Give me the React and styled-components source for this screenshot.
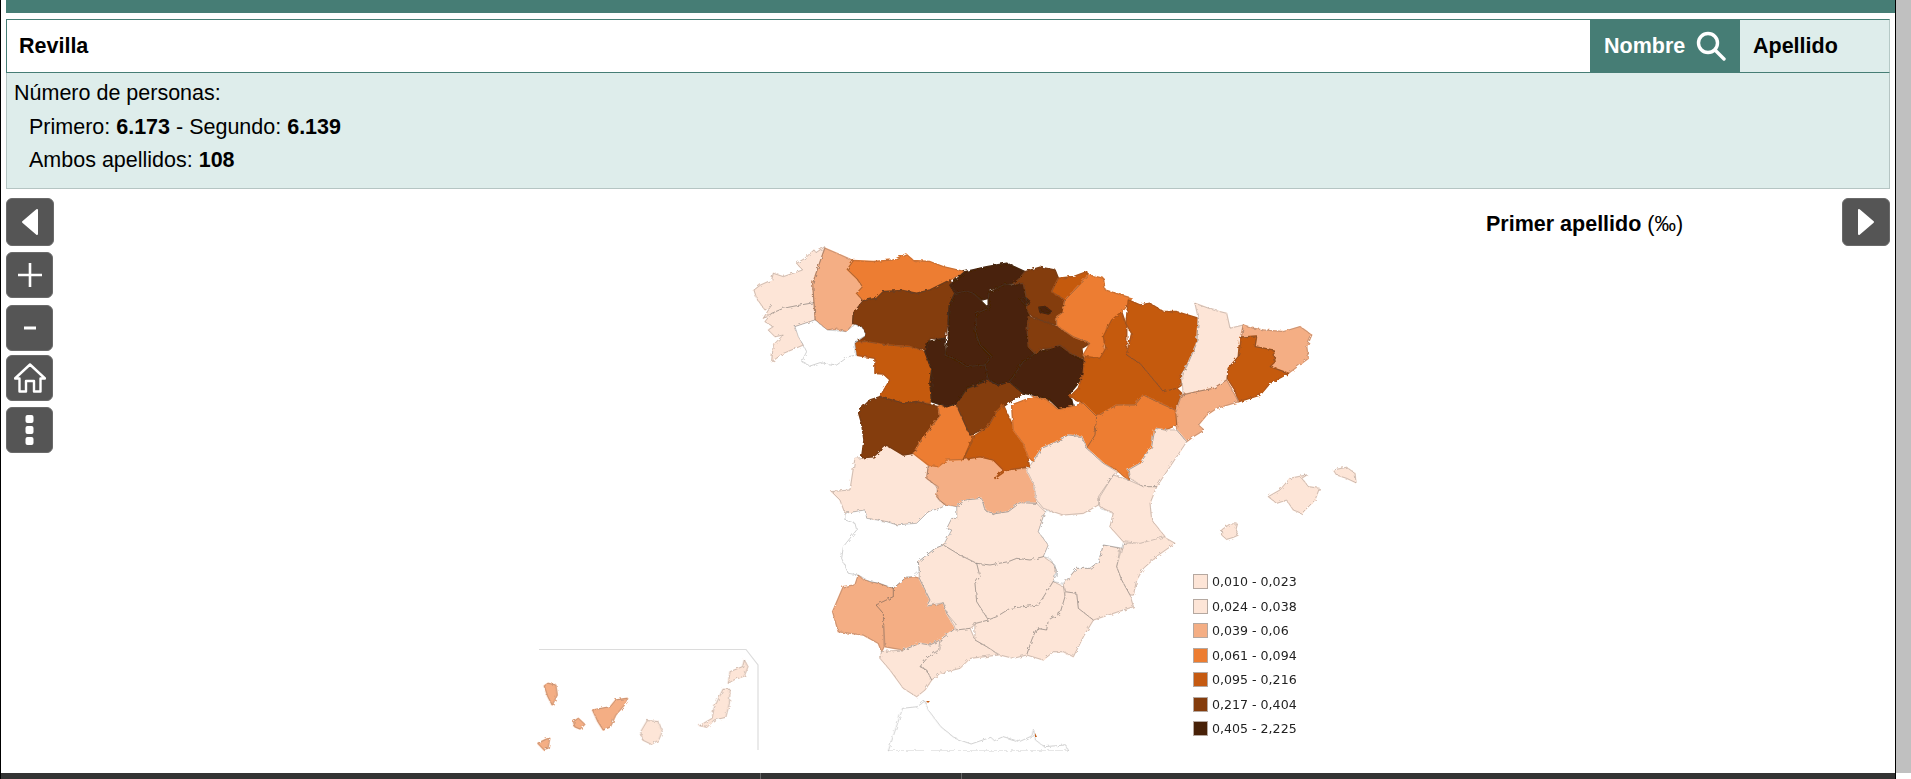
import React from "react"
import styled, { createGlobalStyle } from "styled-components"

const C1 = "#fde5d7"
const C3 = "#f4ae84"
const C4 = "#ed7d31"
const C5 = "#c55a11"
const C6 = "#843c0c"
const C7 = "#482107"
const NONE = "#fff"

// traced by hand, each group in its own crop coordinates
const north = [
  [C1, "255,50 228,68 222,60 195,85 170,100 188,120 165,128 130,140 100,130 95,150 62,165 42,180 50,205 75,240 95,225 70,265 95,250 130,235 165,228 222,218 218,160 235,110"],
  [C1, "222,218 165,228 130,235 95,250 75,275 100,290 85,300 105,320 130,315 100,345 95,395 130,370 190,345 165,290 225,270"],
  [C3, "255,55 290,70 340,92 322,118 350,145 368,170 350,190 368,212 340,250 338,280 320,305 285,295 262,300 226,270 218,160 235,110"],
  [NONE, "165,290 225,270 262,300 318,305 345,283 365,290 380,315 345,340 350,375 325,380 290,405 240,398 210,408 185,395 200,365 190,345 175,320"],
  [C4, "340,92 400,95 460,90 498,72 520,92 570,95 610,110 675,125 630,150 570,180 530,190 490,182 430,185 410,205 370,212 350,190 368,170 350,145 322,118"],
  [C6, "370,212 410,205 430,185 490,182 530,190 570,180 630,150 645,185 628,225 625,270 615,325 570,325 560,360 510,350 440,345 380,335 345,335 380,315 365,290 338,280 340,250"],
  [C5, "345,335 380,335 440,345 510,350 555,365 575,420 578,460 570,520 530,515 490,520 420,500 450,450 430,432 405,430 405,385 345,375 345,340"],
  [C6, "420,500 490,520 530,515 595,530 598,560 575,590 545,630 520,670 490,675 440,645 400,680 365,683 372,630 365,580 355,545 390,510"],
  [C4, "595,528 640,525 650,530 690,615 705,620 670,688 620,690 595,710 565,705 520,670 545,630 575,590 598,560"],
  [C6, "650,525 680,478 745,450 775,465 808,455 850,490 810,515 770,545 745,590 690,615"],
  [C5, "790,525 815,580 860,660 868,710 800,720 765,745 790,720 760,690 720,680 670,688 700,620 745,590 770,545"],
  [C7, "675,125 740,110 770,105 800,100 855,125 835,150 820,160 790,165 750,180 745,205 725,210 700,190 680,183 645,190 630,165"],
  [C7, "645,190 680,183 700,190 725,215 745,235 710,250 705,300 720,345 755,380 735,405 680,410 650,390 615,375 625,330 625,270 628,225"],
  [C7, "560,335 615,325 615,375 650,390 680,410 735,405 745,450 680,475 650,520 620,530 575,515 570,460 575,420 555,365"],
  [C7, "745,190 790,165 820,165 850,160 860,205 860,235 870,260 862,300 865,350 885,370 850,395 820,440 808,455 775,465 745,450 735,405 755,380 720,345 705,300 710,250 745,235 745,205"],
  [C7, "885,370 930,355 960,345 1000,375 1030,390 1038,425 1010,465 990,490 1000,530 960,540 930,510 880,495 850,490 808,455 820,440 850,395"],
  [C6, "865,260 900,270 950,290 1000,320 1050,340 1025,355 1030,385 1000,375 960,345 930,355 910,355 885,370 865,350 862,300"],
  [C6, "820,160 835,150 855,125 900,112 945,120 955,145 935,185 975,210 965,250 950,260 950,285 900,270 870,255 860,235 860,205 850,160"],
  [C7, "897,232 915,230 935,245 925,252 900,246"],
  [C7, "842,208 858,204 870,215 855,224"],
  [C5, "955,145 1000,140 1040,125 1045,140 975,210 935,185"],
  [C4, "1045,135 1090,145 1095,180 1175,205 1155,235 1100,290 1090,340 1095,375 1070,390 1030,375 1050,340 1000,320 950,285 950,260 965,250 975,210"],
]

const east = [
  [C5, "365,155 380,200 380,285 420,310 470,370 490,395 530,385 545,400 525,450 470,425 430,405 405,435 350,435 290,470 250,430 210,410 235,385 250,340 255,290 300,295 318,265 310,230 335,180"],
  [C5, "385,120 420,135 450,130 490,155 530,155 595,175 590,250 560,320 540,345 545,375 530,385 490,395 470,370 420,310 380,285 395,220 378,190"],
  [C1, "585,130 640,150 680,160 690,205 730,195 725,235 715,290 685,325 680,360 640,385 590,395 550,405 545,345 560,320 590,250 595,175"],
  [C3, "730,195 760,205 790,210 850,215 900,200 935,225 920,260 925,295 865,340 810,320 825,305 820,270 765,260 770,228 722,230"],
  [C5, "720,232 770,228 765,260 820,270 825,305 810,320 865,340 810,370 780,405 715,425 705,390 682,355 685,325 715,290"],
  [C3, "680,360 715,425 650,445 620,465 595,495 612,510 580,530 560,545 530,510 530,450 545,405 590,395 640,385"],
  [C4, "290,470 350,435 405,435 430,405 470,425 525,450 530,495 495,510 465,505 455,560 420,610 385,630 385,660 350,630 310,610 260,565 285,525"],
  [C1, "465,505 495,510 530,510 560,545 530,590 470,680 430,680 390,655 385,630 420,610 455,560"],
  [C4, "35,435 100,410 140,420 175,450 215,440 250,430 290,470 285,525 260,565 245,530 205,525 160,550 125,565 100,605 85,590 70,550 40,510"],
  [C1, "85,625 125,565 160,550 205,525 245,530 260,565 310,610 350,635 340,645 300,710 295,735 250,760 190,765 130,745 110,720 100,670 80,630"],
  [C1, "340,645 385,660 430,680 470,680 450,730 455,780 495,830 420,850 370,845 330,800 340,760 300,740 295,710"],
  [C1, "805,710 840,690 870,655 920,645 905,655 925,680 958,685 945,720 905,760 880,750 860,720 830,730"],
  [C1, "1000,630 1040,622 1065,640 1068,668 1040,655 1010,645"],
  [C1, "665,810 690,792 712,792 708,808 715,825 700,832 680,838 665,825"],
]

const south = [
  [C1, "165,-65 220,-70 260,-105 310,-75 340,-80 385,-45 380,-5 410,20 415,60 440,75 420,85 385,95 350,130 290,135 260,125 200,115 195,90 135,100 120,60 95,35 150,30"],
  [C3, "385,-40 440,-60 490,-62 540,-70 580,-60 610,-30 585,-5 620,-30 685,-35 705,35 710,70 660,68 625,95 580,102 555,90 545,55 495,60 470,80 440,80 410,50 415,20 380,-5"],
  [C1, "470,80 495,60 545,55 555,90 580,102 625,95 660,68 710,70 735,95 715,155 745,195 730,230 690,240 650,235 625,245 570,255 530,250 480,225 430,195 455,150 440,145 455,115 470,115"],
  [NONE, "135,100 195,90 200,115 260,125 290,135 350,130 385,95 420,85 440,75 470,80 470,115 455,115 440,145 455,150 430,195 405,205 355,245 358,275 340,290 320,290 280,325 240,310 210,305 175,285 145,280 125,235 130,200 170,150 165,130 135,120"],
  [NONE, "735,95 780,95 820,105 870,90 895,70 900,85 940,100 930,140 970,185 970,205 910,195 895,245 870,265 830,265 790,310 760,305 770,270 750,235 730,230 745,195 715,155"],
  [C3, "175,285 190,300 235,310 280,325 280,350 228,375 250,400 252,500 245,515 235,490 190,465 115,455 98,395 130,320 165,315"],
  [C3, "280,325 315,295 340,290 358,295 390,360 380,378 415,375 430,368 440,400 470,435 460,450 420,480 390,495 360,490 310,510 255,500 250,400 228,375 280,350"],
  [C1, "355,245 405,205 430,195 480,225 530,250 540,290 525,310 530,365 565,420 530,430 510,445 470,450 440,400 430,368 380,378 390,360 358,295 358,275"],
  [C1, "530,250 570,255 625,245 650,235 690,240 730,230 765,255 770,285 750,320 715,375 670,380 630,385 590,410 565,420 530,365 525,310 540,290"],
  [C1, "565,420 590,410 630,385 670,380 715,375 750,320 760,305 790,320 795,350 780,400 745,420 740,450 710,445 695,480 680,525 640,535 600,525 560,500 525,480 525,430"],
  [C1, "795,335 830,340 835,385 880,420 850,470 820,530 790,515 760,515 730,540 680,525 695,480 710,445 740,450 745,420 780,400 795,350"],
  [C1, "790,315 830,265 870,265 895,245 910,195 960,205 950,260 965,300 990,345 1000,380 880,420 835,385 830,340 795,335"],
  [C1, "970,190 1020,190 1090,170 1125,190 1075,225 1030,265 1010,300 1000,345 990,345 965,300 950,260 965,205"],
  [C1, "360,560 385,530 420,510 420,480 460,450 470,450 510,445 525,480 560,500 595,525 510,535 480,565 420,580 395,600 380,570"],
  [C1, "245,515 310,510 360,490 390,495 420,480 415,510 385,530 360,560 380,570 395,600 375,630 350,650 310,625 270,570 240,535"],
]

const islands = [
  [NONE, "1003,363 1043,235 1085,230 1105,213 1115,240 1150,290 1190,325 1235,342 1290,322 1300,332 1325,320 1370,335 1405,318 1410,298 1415,330 1440,350 1500,345 1508,363"],
  [C3, "40,168 50,160 72,165 76,195 62,225 50,200"],
  [C3, "122,275 135,265 153,283 140,297 125,290"],
  [C3, "175,240 225,230 240,210 272,205 272,215 240,255 225,290 205,300 190,275"],
  [C3, "22,340 45,328 55,325 50,355 38,358"],
  [C1, "328,272 360,275 370,305 360,330 340,343 315,330 310,305"],
  [C1, "540,178 560,178 558,220 548,262 515,270 495,292 475,287 510,265 515,235"],
  [C1, "600,90 610,110 600,138 570,150 555,160 560,125 595,110"],
]

const legend = [
  [C1, "0,010 - 0,023"],
  [C1, "0,024 - 0,038"],
  [C3, "0,039 - 0,06"],
  [C4, "0,061 - 0,094"],
  [C5, "0,095 - 0,216"],
  [C6, "0,217 - 0,404"],
  [C7, "0,405 - 2,225"],
]

const GlobalStyle = createGlobalStyle`
  html, body {
    margin: 0;
    height: 100%;
    overflow: hidden;
    background: #fff;
  }
  body {
    font-family: "Liberation Sans", Arial, sans-serif;
    color: #000;
  }
`

const Screen = styled.div`
  display: flex;
  height: 779px;
`

const Scrollbar = styled.div`
  width: 15px;
  height: 773px;
  background: #c0c0c0;
`

const Window = styled.div`
  flex: 1;
  min-width: 0;
  display: flex;
  flex-direction: column;
  border-left: 1px solid #000;
  border-right: 1px solid #000;
`

const Content = styled.div`
  flex: 1;
  padding-left: 5px;
`

const TopBar = styled.div`
  height: 13px;
  background: #467d75;
  margin-bottom: 6px;
`

const Panel = styled.div`
  margin-right: 5px;
`

const SearchRow = styled.div`
  display: flex;
  height: 54px;
  border: 1px solid #467d75;
  border-right-color: #b5c9c6;
  box-sizing: border-box;
  background: #deedeb;
`

const SearchInput = styled.div`
  flex: 1;
  display: flex;
  align-items: center;
  padding-left: 12px;
  background: #fff;
  font-size: 21.5px;
  font-weight: bold;
`

const Tab = styled.div`
  width: ${(p) => (p.$active ? 150 : 149)}px;
  box-sizing: border-box;
  display: flex;
  align-items: center;
  gap: 11px;
  padding-left: ${(p) => (p.$active ? 14 : 13)}px;
  margin: -1px 0;
  font-size: 21.5px;
  font-weight: bold;
  background: ${(p) => (p.$active ? "#467d75" : "transparent")};
  color: ${(p) => (p.$active ? "#fff" : "#000")};
`

const Info = styled.div`
  height: 116px;
  box-sizing: border-box;
  padding: 4px 0 0 7px;
  background: #deedeb;
  border: 1px solid #b5c5c3;
  border-top: 0;
  font-size: 21.5px;
  line-height: 33.5px;
`

const InfoLine = styled.div`
  padding-left: ${(p) => (p.$indent ? "15px" : "0")};
`

const Workspace = styled.div`
  display: flex;
  margin-top: 9px;
  margin-right: 5px;
`

const Tools = styled.div`
  width: 48px;
  flex: none;
  display: flex;
  flex-direction: column;
`

const ToolButton = styled.div`
  width: ${(p) => p.$size || 47}px;
  height: ${(p) => p.$size || 46}px;
  margin-bottom: ${(p) => p.$gap ?? 6}px;
  flex: none;
  display: flex;
  align-items: center;
  justify-content: center;
  background: #555;
  border: 1px solid #6a6a6a;
  box-sizing: border-box;
  border-radius: 6px;
`

const Stage = styled.div`
  flex: 1;
  min-width: 0;
  display: flex;
  align-items: flex-start;
`

const MapCanvas = styled.div`
  position: relative;
  width: 840px;
  height: 575px;
  margin-left: 476px;
  flex: none;
`

const MapSvg = styled.svg`
  display: block;
  width: 840px;
  height: 575px;
`

const LegendBox = styled.div`
  position: absolute;
  left: 663px;
  top: 376px;
  display: flex;
  flex-direction: column;
  gap: 9.5px;
`

const LegendRow = styled.div`
  display: flex;
  align-items: center;
  gap: 4px;
  height: 15px;
  font-family: "DejaVu Sans", Verdana, sans-serif;
  font-size: 12.6px;
  color: #222;
`

const Swatch = styled.span`
  width: 15px;
  height: 15px;
  box-sizing: border-box;
  border: 1px solid #b5a8a0;
  background: ${(p) => p.$color};
`

const MapTitle = styled.div`
  margin: 14px 0 0 116px;
  font-size: 21.5px;
  font-weight: bold;
  white-space: nowrap;
`

const Permille = styled.span`
  font-weight: normal;
`

const Footer = styled.div`
  height: 6px;
  flex: none;
  display: flex;
  background: #333;
`

const FooterCell = styled.div`
  width: ${(p) => p.$width}px;
  border-right: 1px solid #666;
`

const Provinces = ({ shapes, transform }) => (
  <g transform={transform} strokeLinejoin="round">
    {/* first pass closes the slivers left between traced neighbours */}
    {shapes.map(([fill, points], i) =>
      fill === NONE ? null : (
        <polygon key={i} points={points} fill={fill} stroke={fill} strokeWidth="1.6" vectorEffect="non-scaling-stroke" />
      )
    )}
    {shapes.map(([fill, points], i) => (
      <polygon
        key={i}
        points={points}
        fill={fill === NONE ? fill : "none"}
        stroke="#444"
        strokeOpacity="0.42"
        strokeWidth="0.6"
        vectorEffect="non-scaling-stroke"
      />
    ))}
  </g>
)

const SpainMap = () => (
  <MapSvg viewBox="530 198 840 575">
    <defs>
      <filter id="rough" x="-2%" y="-2%" width="104%" height="104%">
        <feTurbulence type="fractalNoise" baseFrequency="0.28" numOctaves="2" seed="4" />
        <feDisplacementMap in="SourceGraphic" scale="3.5" />
        <feGaussianBlur stdDeviation="0.3" />
      </filter>
    </defs>
    <g filter="url(#rough)">
      <Provinces shapes={south} transform="translate(800 480) scale(.33333)" />
      <Provinces shapes={north} transform="translate(740 230) scale(.33333)" />
      <Provinces shapes={east} transform="translate(1000 260) scale(.33333)" />
      <Provinces shapes={islands} transform="translate(530 630) scale(.35714 .33333)" />
    </g>
    {/* Ceuta and Melilla, too small to take the rough edge */}
    <path d="M926 701 h4 l-2 2 Z M1035 733 l2 4 h-2 Z" fill={C5} />
    <polyline
      points="539,649.5 746,649.5 758,665 758,750"
      fill="none"
      stroke="#dcdcdc"
      strokeWidth="1.2"
    />
  </MapSvg>
)

const SearchIcon = () => (
  <svg width="30" height="30" viewBox="0 0 30 30" fill="none" stroke="#fff" strokeWidth="3.4">
    <circle cx="12" cy="12" r="9.5" />
    <path d="M19 19 L28 28" strokeLinecap="round" />
  </svg>
)

const Arrow = ({ left }) => (
  <svg width="18" height="28" viewBox="0 0 18 28" fill="#fff" stroke="#fff" strokeWidth="2" strokeLinejoin="round">
    <path d={left ? "M16 2 V26 L2 14 Z" : "M2 2 V26 L16 14 Z"} />
  </svg>
)

const PlusIcon = () => (
  <svg width="24" height="24" viewBox="0 0 24 24" stroke="#fff" strokeWidth="2.6">
    <path d="M0 12 H24 M12 0 V24" />
  </svg>
)

const MinusIcon = () => (
  <svg width="12" height="4" viewBox="0 0 12 4" fill="#fff">
    <rect width="12" height="3" y="0.5" />
  </svg>
)

const HomeIcon = () => (
  <svg width="32" height="30" viewBox="0 0 32 30" fill="none" stroke="#fff" strokeWidth="2.4" strokeLinejoin="round">
    <path d="M1 15.5 L16 1.5 L31 15.5 H26.5 V28.5 H20 V18 H12 V28.5 H5.5 V15.5 Z" />
  </svg>
)

const DotsIcon = () => (
  <svg width="9" height="30" viewBox="0 0 9 30" fill="#fff">
    <rect x="0.5" y="0" width="8" height="8" rx="2" />
    <rect x="0.5" y="11" width="8" height="8" rx="2" />
    <rect x="0.5" y="22" width="8" height="8" rx="2" />
  </svg>
)

export default function App() {
  return (
    <>
      <GlobalStyle />
      <Screen>
        <Window>
          <Content>
            <TopBar />
            <Panel>
              <SearchRow>
                <SearchInput>Revilla</SearchInput>
                <Tab $active>
                  Nombre
                  <SearchIcon />
                </Tab>
                <Tab>Apellido</Tab>
              </SearchRow>
              <Info>
                <InfoLine>Número de personas:</InfoLine>
                <InfoLine $indent>
                  Primero: <b>6.173</b> - Segundo: <b>6.139</b>
                </InfoLine>
                <InfoLine $indent>
                  Ambos apellidos: <b>108</b>
                </InfoLine>
              </Info>
            </Panel>
            <Workspace>
              <Tools>
                <ToolButton $size={48}>
                  <Arrow left />
                </ToolButton>
                <ToolButton $gap={7}>
                  <PlusIcon />
                </ToolButton>
                <ToolButton $gap={4}>
                  <MinusIcon />
                </ToolButton>
                <ToolButton>
                  <HomeIcon />
                </ToolButton>
                <ToolButton>
                  <DotsIcon />
                </ToolButton>
              </Tools>
              <Stage>
                <MapCanvas>
                  <SpainMap />
                  <LegendBox>
                    {legend.map(([color, label]) => (
                      <LegendRow key={label}>
                        <Swatch $color={color} />
                        {label}
                      </LegendRow>
                    ))}
                  </LegendBox>
                </MapCanvas>
                <MapTitle>
                  Primer apellido <Permille>(‰)</Permille>
                </MapTitle>
              </Stage>
              <ToolButton $size={48}>
                <Arrow />
              </ToolButton>
            </Workspace>
          </Content>
          <Footer>
            <FooterCell $width={759} />
            <FooterCell $width={200} />
          </Footer>
        </Window>
        <Scrollbar />
      </Screen>
    </>
  )
}
